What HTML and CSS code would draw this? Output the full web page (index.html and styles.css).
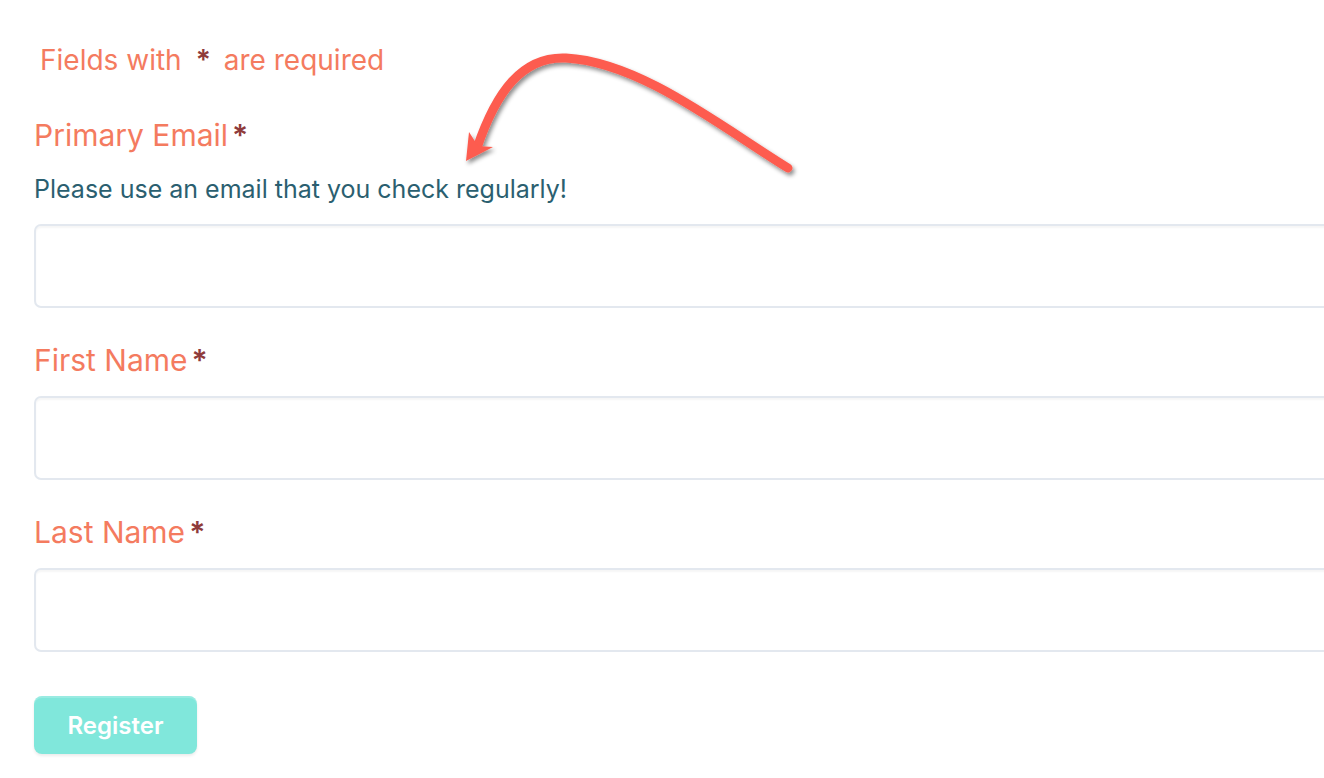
FILE: index.html
```html
<!DOCTYPE html>
<html lang="en">
<head>
<meta charset="utf-8">
<title>Register</title>
<link rel="stylesheet" href="styles.css">
</head>
<body>
<form class="form">
  <p class="required-note">Fields with<span class="req">*</span>are required</p>

  <div class="field">
    <label class="label" for="email">Primary Email<span class="req">*</span></label>
    <p class="help">Please use an email that you check regularly!</p>
    <input class="input" id="email" type="email">
  </div>

  <div class="field">
    <label class="label" for="first">First Name<span class="req">*</span></label>
    <input class="input" id="first" type="text">
  </div>

  <div class="field">
    <label class="label" for="last">Last Name<span class="req">*</span></label>
    <input class="input" id="last" type="text">
  </div>

  <button class="button" type="button">Register</button>
</form>

<svg class="arrow" width="1324" height="778" viewBox="0 0 1324 778" aria-hidden="true">
  <defs>
    <filter id="shadow" x="-20%" y="-20%" width="140%" height="140%">
      <feDropShadow dx="2" dy="3" stdDeviation="2.2" flood-color="#000" flood-opacity="0.45"/>
    </filter>
  </defs>
  <g filter="url(#shadow)">
    <path d="M788 168 C 720 126, 640 62, 566 58 C 522 56, 496 92, 477 148" fill="none" stroke="#fd5c4f" stroke-width="9" stroke-linecap="round"/>
    <polygon points="466,161 469,132 478,146 493,147" fill="#fd5c4f"/>
  </g>
</svg>
</body>
</html>
```

FILE: styles.css
```css
html, body {
  margin: 0;
  padding: 0;
  background: #ffffff;
  overflow: hidden;
}

body {
  font-family: Inter, "Noto Sans", "Liberation Sans", sans-serif;
  width: 1324px;
  height: 778px;
  position: relative;
}

.form {
  padding: 42px 0 0 34px;
  display: flex;
  flex-direction: column;
  align-items: flex-start;
}

.required-note {
  margin: 0 0 39px 0;
  padding-left: 6px;
  font-size: 28px;
  line-height: 36px;
  color: #f47b5f;
}

.required-note .req {
  margin: 0 13px 0 14px;
}

.req {
  color: #8f3b3b;
  font-weight: 600;
}

.field {
  display: flex;
  flex-direction: column;
  margin-bottom: 34px;
}

.field:last-of-type {
  margin-bottom: 44px;
}

.label {
  font-size: 30px;
  line-height: 36px;
  color: #f47b5f;
  margin-bottom: 18px;
}

.label .req {
  margin-left: 4px;
}

.help {
  margin: 3px 0 20px 0;
  font-size: 25px;
  line-height: 30px;
  color: #2b5f70;
}

.input {
  box-sizing: border-box;
  width: 1340px;
  height: 84px;
  border: 2px solid #e3e8ef;
  border-radius: 7px;
  background: #ffffff;
  box-shadow: inset 0 2px 2px rgba(0, 0, 0, 0.04);
  outline: none;
  font: inherit;
}

.button {
  box-sizing: border-box;
  width: 163px;
  height: 58px;
  border: none;
  border-radius: 8px;
  background: #80e7db;
  color: #ffffff;
  font-family: inherit;
  font-size: 24px;
  font-weight: 600;
  box-shadow: inset 0 2px 0 rgba(255, 255, 255, 0.2), 0 2px 3px rgba(0, 0, 0, 0.08);
  cursor: pointer;
}

.arrow {
  position: absolute;
  left: 0;
  top: 0;
  pointer-events: none;
}
```
